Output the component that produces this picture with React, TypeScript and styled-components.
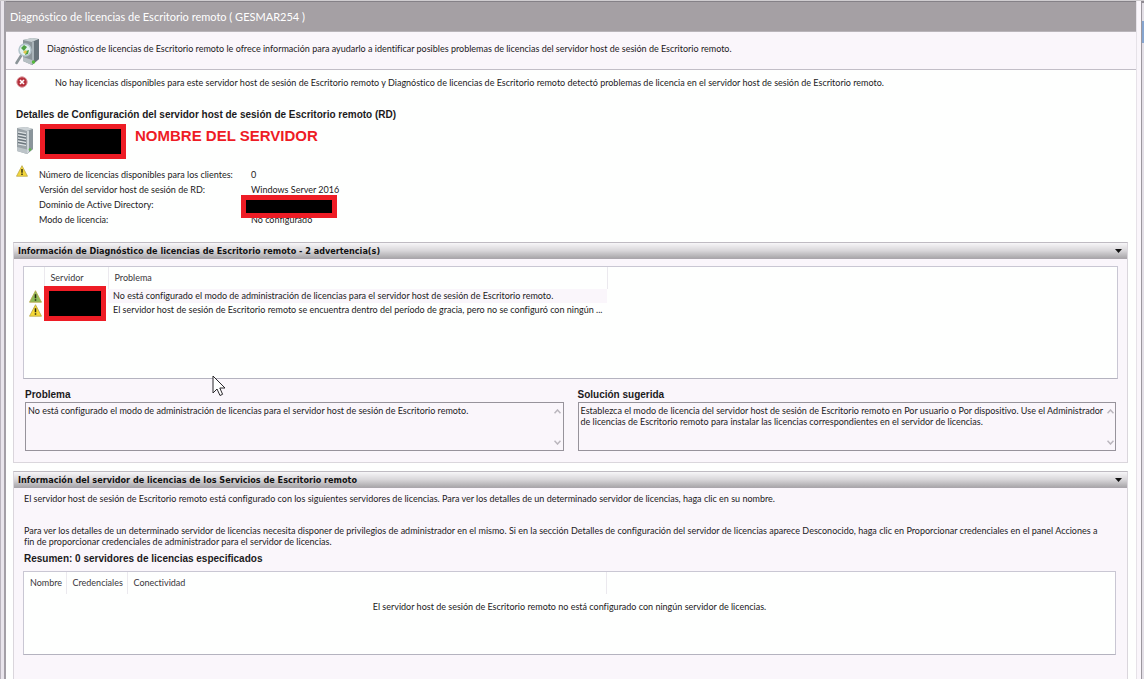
import React from 'react';
import styled, { createGlobalStyle } from 'styled-components';

const colors = {
  tint: '#faf6fb',
  white: '#fefffe',
  text: '#1c1a1c',
  frame: '#dad6dc',
  redaction: '#ee1c25',
};

const GlobalStyle = createGlobalStyle`
  *, *::before, *::after { box-sizing: border-box; }
  body {
    margin: 0;
    color: ${colors.text};
    background: ${colors.white};
    font: 9px/11px Lato, "Liberation Sans", sans-serif;
    font-variant-ligatures: none;
  }
  h1, h2, h3, p, dl, dd, dt { margin: 0; }
`;

const Window = styled.div`
  display: flex;
  min-height: 100vh;
  border-top: 1px solid #d0cdd0;
`;

const LeftEdge = styled.div`
  flex: 0 0 6px;
  border-left: 1px solid #b9b4bd;
  border-right: 2px solid #a39fa6;
  background: #e9e5ec;
`;

const RightEdge = styled.div`
  flex: 0 0 8px;
  display: flex;
  justify-content: flex-end;
  border-left: 1px solid #e6e2e8;
  background: ${colors.tint};
`;

const ActionsPane = styled.div`
  width: 3px;
  padding-top: 18px;
  border-left: 1px solid #9b979e;
  border-top: 2px solid #8f8b92;
  background: #e3dfe6;
`;

const ActionsMark = styled.div`
  height: 22px;
  background: #86a5cf;
`;

const Content = styled.main`
  flex: 1;
  min-width: 0;
  display: flex;
  flex-direction: column;
  background: ${colors.white};
`;

const TitleBar = styled.header`
  height: 31px;
  display: flex;
  align-items: center;
  padding-left: 4px;
  border-top: 1px solid #858187;
  border-bottom: 1px solid #b9b5ba;
  background: #a5a0a4;
`;

const Title = styled.h1`
  color: #fff;
  font-size: 11px;
  font-weight: 400;
  line-height: 14px;
`;

const Intro = styled.div`
  height: 38px;
  display: flex;
  align-items: center;
  gap: 7px;
  padding: 0 10px 4px 9px;
  border-bottom: 1px solid #c2bec7;
  background: ${colors.tint};

  svg { margin-top: 5px; }
`;

const ErrorRow = styled.div`
  height: 24px;
  display: flex;
  align-items: center;
  gap: 27px;
  padding-left: 10px;
`;

const Details = styled.section`
  padding: 15px 10px 0;
`;

const DetailsHeading = styled.h2`
  font: 700 10px/12px "Liberation Sans", Arial, sans-serif;
`;

const ServerLine = styled.div`
  display: flex;
  align-items: flex-start;
  gap: 5px;
  padding-top: 3px;

  svg { margin-top: 3px; }
`;

const Redaction = styled.div<{ $w: number; $h: number }>`
  width: ${p => p.$w}px;
  height: ${p => p.$h}px;
  border: 5px solid ${colors.redaction};
  background: #000;
`;

const ServerCaption = styled.p`
  padding: 3px 0 0 4px;
  color: ${colors.redaction};
  font: 700 15px/18px "Liberation Sans", Arial, sans-serif;
`;

const Facts = styled.div`
  display: flex;
  align-items: flex-start;
  gap: 11px;
  padding-top: 6px;
`;

const FactList = styled.dl`
  display: grid;
  grid-template-columns: 212px auto;
  grid-auto-rows: 15px;
  line-height: 15px;
  padding-top: 2px;
`;

const FactValue = styled.dd`
  position: relative;
`;

const FactCover = styled.div`
  position: absolute;
  top: -2px;
  left: -10px;
`;

const Panel = styled.section<{ $fill?: boolean }>`
  margin: ${p => (p.$fill ? '8px' : '15px')} 8px 0 7px;
  border: 1px solid ${colors.frame};
  border-top-color: #bfbbc2;
  background: ${colors.tint};
  ${p => p.$fill && 'flex: 1; border-bottom: 0;'}
`;

const PanelHeader = styled.div`
  height: 16px;
  display: flex;
  align-items: center;
  justify-content: space-between;
  padding: 0 4px;
  border-bottom: 1px solid #aaa6ac;
  background: linear-gradient(#f7f6f8, #d9d7da 50%, #aaa8ab);
`;

const PanelTitle = styled.h2`
  color: #111;
  font: 700 9px/14px "DejaVu Sans Condensed", "DejaVu Sans", sans-serif;
`;

const Toggle = styled.button`
  width: 9px;
  height: 14px;
  display: grid;
  place-items: center;
  padding: 0;
  border: 0;
  background: none;
`;

const WarningsBody = styled.div`
  position: relative;
  padding: 7px 9px 11px;
`;

const ListBox = styled.div<{ $h: number }>`
  height: ${p => p.$h}px;
  border: 1px solid #c9c7d3;
  border-bottom-color: #b4b3bf;
  background: ${colors.white};
`;

const Table = styled.table`
  border-collapse: collapse;
  table-layout: fixed;
`;

const Head = styled.th<{ $w: number }>`
  width: ${p => p.$w}px;
  height: 22px;
  padding: 0 0 2px 6px;
  border-right: 1px solid #ebe9ee;
  font-weight: 400;
  text-align: left;
  color: #39363b;
`;

const Cell = styled.td<{ $selected?: boolean }>`
  height: 14px;
  padding: 0 0 0 5px;
  line-height: 14px;
  white-space: nowrap;
  background: ${p => (p.$selected ? colors.tint : 'transparent')};

  svg { display: block; }
`;

const NameCell = styled(Cell)`
  position: relative;
`;

const NameCover = styled.div`
  position: absolute;
  top: -3px;
  left: 0;
`;

const Fields = styled.div`
  display: grid;
  grid-template-columns: 1fr 1fr;
  gap: 14px;
  padding: 9px 2px 0;
`;

const Label = styled.label`
  display: block;
  font: 700 10px/14px "Liberation Sans", Arial, sans-serif;
`;

const Memo = styled.div`
  display: flex;
  height: 49px;
  border: 1px solid #97939b;
`;

const MemoText = styled.textarea`
  flex: 1;
  min-width: 0;
  padding: 2px 0 0 2px;
  border: 0;
  outline: 0;
  resize: none;
  overflow: hidden;
  white-space: pre;
  background: transparent;
  color: inherit;
  font: inherit;
  font-variant-ligatures: none;
`;

const MemoScroll = styled.div`
  width: 10px;
  display: flex;
  flex-direction: column;
  justify-content: space-between;
`;

const ScrollButton = styled.button`
  height: 16px;
  display: grid;
  place-items: center;
  padding: 0;
  border: 0;
  background: none;
`;

const Pointer = styled.svg`
  position: absolute;
  left: 198px;
  top: 116px;
`;

const ServersBody = styled.div`
  padding: 5px 11px 24px 9px;
`;

const Paragraph = styled.p<{ $gap: number }>`
  padding-left: 1px;
  margin-bottom: ${p => p.$gap}px;
  white-space: nowrap;
`;

const Summary = styled.h3`
  margin-bottom: 5px;
  padding-left: 1px;
  font: 700 10px/14px "Liberation Sans", Arial, sans-serif;
`;

const EmptyMessage = styled.p`
  padding-top: 7px;
  text-align: center;
`;

function ServerIcon() {
  return (
    <svg width="19" height="27" viewBox="0 0 19 27" aria-hidden="true">
      <path d="M1 1l9-1 7 2v20l-6 5-10-3z" fill="#9aa3a8" />
      <path d="M1 1l9-1 7 2-6 2z" fill="#ccd3d6" />
      <path d="M11 4l6-2v20l-6 5z" fill="#8a959b" />
      <path d="M11 4l2-.6V25l-2 2z" fill="#cdd5d8" />
      <path d="M2 5l8 1.500M2 8l8 1.500M2 11l8 1.500M2 14l8 1.500M2 17l8 1.500" stroke="#e4e8ea" strokeWidth="1.200" />
      <path d="M2 6.500L10 8M2 9.500l8 1.500M2 12.500l8 1.500M2 15.500l8 1.500" stroke="#56626a" strokeWidth=".8" />
      <path d="M1 20l10 2.500V27L1 24z" fill="#bcc4c8" />
      <circle cx="14" cy="22.500" r="1.300" fill="#5bb845" />
    </svg>
  );
}

function DiagnoserIcon() {
  return (
    <svg width="25" height="27" viewBox="0 0 25 27" aria-hidden="true">
      <path d="M8 2l9-2 7 1v20l-7 6-9-4z" fill="#8b959a" />
      <path d="M8 2l9-2 7 1-7 3z" fill="#c6cfd2" />
      <path d="M17 4l7-3v20l-7 6z" fill="#67737a" />
      <path d="M17 4l2-.8V25l-2 2z" fill="#a8b3b8" />
      <path d="M8 19l9 3v5l-9-4z" fill="#b6bfc3" />
      <path d="M1.500 25l5-8" stroke="#8b9498" strokeWidth="2.600" strokeLinecap="round" />
      <circle cx="10" cy="12" r="6" fill="#e3f1f0" stroke="#b4c5cc" strokeWidth="1.500" />
      <path d="M6 10l3-3 3 2-3 4zM11 13l3-1-1 4-3 1z" fill="#4fa044" />
      <path d="M8 14l3-2 1 2-2 2z" fill="#e2c64a" />
      <circle cx="18.500" cy="24" r="1.700" fill="#55ba3c" />
    </svg>
  );
}

function ErrorIcon() {
  return (
    <svg width="12" height="12" viewBox="0 0 12 12" aria-hidden="true">
      <circle cx="6" cy="6" r="5.200" fill="#b5323c" stroke="#d99a9f" />
      <path d="M4 4l4 4M8 4L4 8" stroke="#fff" strokeWidth="1.600" />
    </svg>
  );
}

function WarningIcon({ size, fill }: { size: number; fill: string }) {
  return (
    <svg width={size} height={size} viewBox="0 0 13 13" aria-hidden="true">
      <path d="M6.500 .7L12.500 12.200H.5z" fill={fill} stroke="#b9a548" strokeWidth=".8" strokeLinejoin="round" />
      <path d="M6.500 4.300v4M6.500 9.300v1.500" stroke="#27240f" strokeWidth="1.500" />
    </svg>
  );
}

function ToggleButton({ label }: { label: string }) {
  return (
    <Toggle type="button" aria-label={label}>
      <svg width="7" height="4" viewBox="0 0 7 4" aria-hidden="true">
        <path d="M0 0h7L3.500 4z" fill="#111" />
      </svg>
    </Toggle>
  );
}

function Chevron({ d }: { d: string }) {
  return (
    <svg width="7" height="5" viewBox="0 0 7 5" aria-hidden="true">
      <path d={d} fill="none" stroke="#bab6bd" strokeWidth="1.500" />
    </svg>
  );
}

function MemoField({ id, label, value }: { id: string; label: string; value: string }) {
  return (
    <div>
      <Label htmlFor={id}>{label}</Label>
      <Memo>
        <MemoText id={id} readOnly value={value} />
        <MemoScroll>
          <ScrollButton type="button" aria-label="Subir"><Chevron d="M.5 4.300L3.500 1l3 3.300" /></ScrollButton>
          <ScrollButton type="button" aria-label="Bajar"><Chevron d="M.5 .7L3.500 4l3-3.300" /></ScrollButton>
        </MemoScroll>
      </Memo>
    </div>
  );
}

export default function App() {
  return (
    <Window>
      <GlobalStyle />
      <LeftEdge />
      <Content>
        <TitleBar>
          <Title>Diagnóstico de licencias de Escritorio remoto ( GESMAR254 )</Title>
        </TitleBar>
        <Intro>
          <DiagnoserIcon />
          <p>Diagnóstico de licencias de Escritorio remoto le ofrece información para ayudarlo a identificar posibles problemas de licencias del servidor host de sesión de Escritorio remoto.</p>
        </Intro>
        <ErrorRow>
          <ErrorIcon />
          <p>No hay licencias disponibles para este servidor host de sesión de Escritorio remoto y Diagnóstico de licencias de Escritorio remoto detectó problemas de licencia en el servidor host de sesión de Escritorio remoto.</p>
        </ErrorRow>

        <Details>
          <DetailsHeading>Detalles de Configuración del servidor host de sesión de Escritorio remoto (RD)</DetailsHeading>
          <ServerLine>
            <ServerIcon />
            <Redaction $w={86} $h={35} />
            <ServerCaption>NOMBRE DEL SERVIDOR</ServerCaption>
          </ServerLine>
          <Facts>
            <WarningIcon size={12} fill="#f3d63a" />
            <FactList>
              <dt>Número de licencias disponibles para los clientes:</dt>
              <FactValue>0</FactValue>
              <dt>Versión del servidor host de sesión de RD:</dt>
              <FactValue>Windows Server 2016</FactValue>
              <dt>Dominio de Active Directory:</dt>
              <FactValue><FactCover><Redaction $w={96} $h={23} /></FactCover></FactValue>
              <dt>Modo de licencia:</dt>
              <dd>No configurado</dd>
            </FactList>
          </Facts>
        </Details>

        <Panel>
          <PanelHeader>
            <PanelTitle>Información de Diagnóstico de licencias de Escritorio remoto - 2 advertencia(s)</PanelTitle>
            <ToggleButton label="Contraer advertencias" />
          </PanelHeader>
          <WarningsBody>
            <ListBox $h={113}>
              <Table>
                <thead>
                  <tr>
                    <Head $w={20} aria-label="Estado" />
                    <Head $w={64}>Servidor</Head>
                    <Head $w={499}>Problema</Head>
                  </tr>
                </thead>
                <tbody>
                  <tr>
                    <Cell><WarningIcon size={13} fill="#8fbb58" /></Cell>
                    <NameCell rowSpan={2}><NameCover><Redaction $w={62} $h={35} /></NameCover></NameCell>
                    <Cell $selected>No está configurado el modo de administración de licencias para el servidor host de sesión de Escritorio remoto.</Cell>
                  </tr>
                  <tr>
                    <Cell><WarningIcon size={13} fill="#f6d935" /></Cell>
                    <Cell>El servidor host de sesión de Escritorio remoto se encuentra dentro del período de gracia, pero no se configuró con ningún ...</Cell>
                  </tr>
                </tbody>
              </Table>
            </ListBox>
            <Fields>
              <MemoField
                id="problema"
                label="Problema"
                value="No está configurado el modo de administración de licencias para el servidor host de sesión de Escritorio remoto."
              />
              <MemoField
                id="solucion"
                label="Solución sugerida"
                value={'Establezca el modo de licencia del servidor host de sesión de Escritorio remoto en Por usuario o Por dispositivo. Use el Administrador\nde licencias de Escritorio remoto para instalar las licencias correspondientes en el servidor de licencias.'}
              />
            </Fields>
            <Pointer width="14" height="22" viewBox="0 0 14 22" aria-hidden="true">
              <path d="M1 1v17l4-4 3 6.500 2.600-1.200L7.800 13H13z" fill="#fff" stroke="#2a282c" />
            </Pointer>
          </WarningsBody>
        </Panel>

        <Panel $fill>
          <PanelHeader>
            <PanelTitle>Información del servidor de licencias de los Servicios de Escritorio remoto</PanelTitle>
            <ToggleButton label="Contraer servidores de licencias" />
          </PanelHeader>
          <ServersBody>
            <Paragraph $gap={21}>El servidor host de sesión de Escritorio remoto está configurado con los siguientes servidores de licencias. Para ver los detalles de un determinado servidor de licencias, haga clic en su nombre.</Paragraph>
            <Paragraph $gap={5}>
              Para ver los detalles de un determinado servidor de licencias necesita disponer de privilegios de administrador en el mismo. Si en la sección Detalles de configuración del servidor de licencias aparece Desconocido, haga clic en Proporcionar credenciales en el panel Acciones a
              <br />
              fin de proporcionar credenciales de administrador para el servidor de licencias.
            </Paragraph>
            <Summary>Resumen: 0 servidores de licencias especificados</Summary>
            <ListBox $h={84}>
              <Table>
                <thead>
                  <tr>
                    <Head $w={42}>Nombre</Head>
                    <Head $w={61}>Credenciales</Head>
                    <Head $w={479}>Conectividad</Head>
                  </tr>
                </thead>
              </Table>
              <EmptyMessage>El servidor host de sesión de Escritorio remoto no está configurado con ningún servidor de licencias.</EmptyMessage>
            </ListBox>
          </ServersBody>
        </Panel>
      </Content>
      <RightEdge>
        <ActionsPane><ActionsMark /></ActionsPane>
      </RightEdge>
    </Window>
  );
}
